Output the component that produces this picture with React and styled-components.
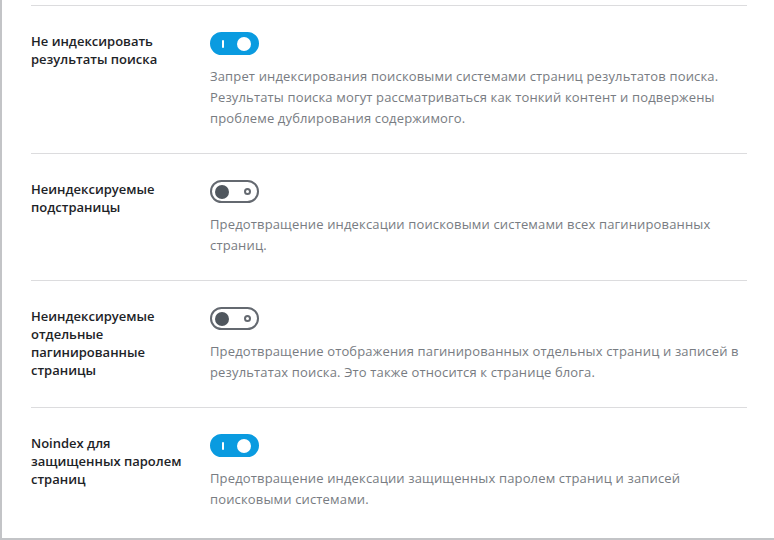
import React from 'react';
import styled, { createGlobalStyle } from 'styled-components';

const GlobalStyle = createGlobalStyle`
  body {
    margin: 0;
    background: #fff;
    font-family: "Open Sans", "Noto Sans", sans-serif;
  }
`;

const Panel = styled.div`
  box-sizing: border-box;
  width: 774px;
  height: 540px;
  padding: 5px 27px 0 29px;
  border-left: 2px solid #c3c4c7;
  border-bottom: 2px solid #c3c4c7;
  background: #fff;
  overflow: hidden;
`;

const Row = styled.div`
  display: flex;
  padding: 26px 0 24px;
  border-top: 1px solid #dcdcde;
`;

const Label = styled.div`
  width: 179px;
  flex-shrink: 0;
  padding-right: 16px;
  box-sizing: border-box;
  font-size: 13px;
  font-weight: 600;
  line-height: 18px;
  color: #1d2327;
`;

const Field = styled.div`
  flex: 1;
  display: flex;
  flex-direction: column;
  align-items: flex-start;
  gap: 11px;
`;

const Track = styled.button`
  box-sizing: border-box;
  width: 49px;
  height: 23px;
  margin: 0;
  border-radius: 12px;
  border: 2px solid ${({ $on }) => ($on ? '#0a9be0' : '#646970')};
  background: ${({ $on }) => ($on ? '#0a9be0' : '#fff')};
  display: flex;
  align-items: center;
  justify-content: space-between;
  padding: ${({ $on }) => ($on ? '0 6px 0 10px' : '0 6px 0 3px')};
  cursor: pointer;
`;

const Bar = styled.span`
  width: 2px;
  height: 8px;
  border-radius: 1px;
  background: #fff;
`;

const Knob = styled.span`
  width: 14px;
  height: 14px;
  border-radius: 50%;
  background: ${({ $on }) => ($on ? '#fff' : '#50575e')};
`;

const Ring = styled.span`
  box-sizing: border-box;
  width: 7px;
  height: 7px;
  border-radius: 50%;
  border: 2px solid #646970;
`;

const Description = styled.p`
  margin: 0;
  max-width: 530px;
  font-size: 13px;
  line-height: 21px;
  letter-spacing: 0.15px;
  color: #787c82;
`;

const Toggle = ({ on }) => (
  <Track $on={on} type="button" aria-pressed={on}>
    {on ? (
      <>
        <Bar />
        <Knob $on />
      </>
    ) : (
      <>
        <Knob />
        <Ring />
      </>
    )}
  </Track>
);

const settings = [
  {
    label: 'Не индексировать результаты поиска',
    on: true,
    text: 'Запрет индексирования поисковыми системами страниц результатов поиска. Результаты поиска могут рассматриваться как тонкий контент и подвержены проблеме дублирования содержимого.',
  },
  {
    label: 'Неиндексируемые подстраницы',
    on: false,
    text: 'Предотвращение индексации поисковыми системами всех пагинированных страниц.',
  },
  {
    label: 'Неиндексируемые отдельные пагинированные страницы',
    on: false,
    text: 'Предотвращение отображения пагинированных отдельных страниц и записей в результатах поиска. Это также относится к странице блога.',
  },
  {
    label: 'Noindex для защищенных паролем страниц',
    on: true,
    text: 'Предотвращение индексации защищенных паролем страниц и записей поисковыми системами.',
  },
];

const App = () => {
  return (
    <>
      <GlobalStyle />
      <Panel>
        {settings.map((s) => (
          <Row key={s.label}>
            <Label>{s.label}</Label>
            <Field>
              <Toggle on={s.on} />
              <Description>{s.text}</Description>
            </Field>
          </Row>
        ))}
      </Panel>
    </>
  );
};

export default App;
